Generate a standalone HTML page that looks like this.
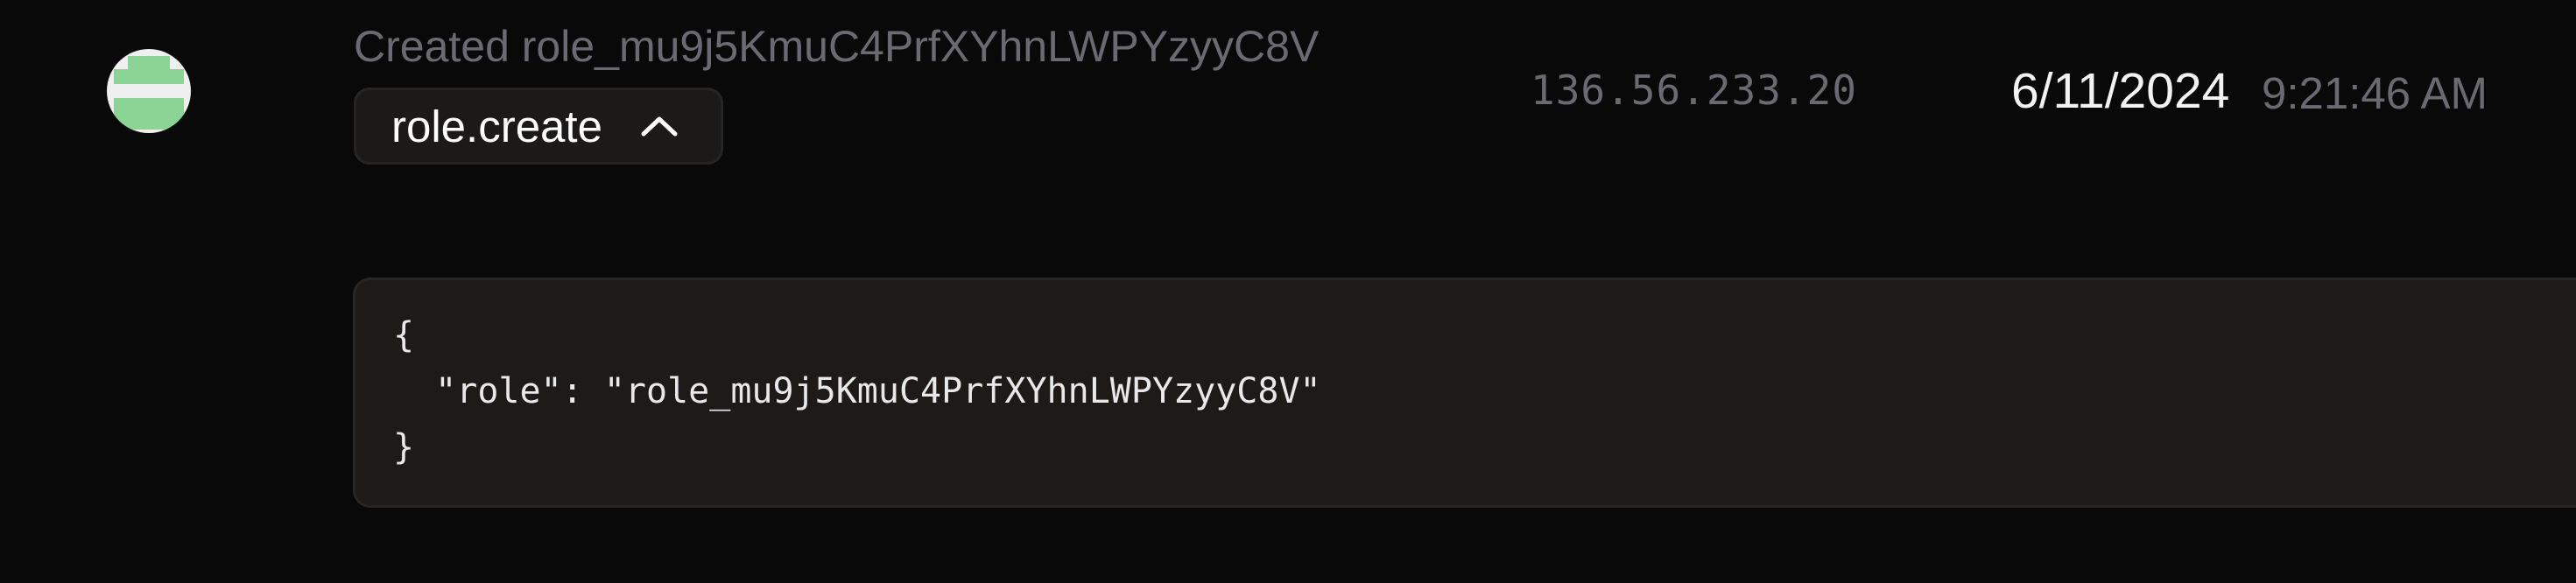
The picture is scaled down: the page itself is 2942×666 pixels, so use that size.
<!DOCTYPE html>
<html><head><meta charset="utf-8"><style>
html,body{margin:0;padding:0;width:2942px;height:666px;background:#0a0909;overflow:hidden}
body{position:relative;font-family:"Liberation Sans",sans-serif}
.av{position:absolute;left:122px;top:56px;width:96px;height:96px;border-radius:50%;background:#efefef;overflow:hidden}
.av div{position:absolute;background:#8ad595}
.t{position:absolute;white-space:nowrap;line-height:1}
.btn{position:absolute;left:404px;top:100px;width:422px;height:88px;box-sizing:border-box;border:3px solid #262524;border-radius:18px;background:#1c1a18}
.code{position:absolute;left:403px;top:317px;width:2700px;height:263px;box-sizing:border-box;border:3px solid #272625;border-radius:20px;background:#1d1a18;padding:31px 0 0 43px;font-family:"DejaVu Sans Mono","Liberation Mono",monospace;font-size:40px;line-height:64px;color:#e8e8ea;white-space:pre}
</style></head><body>
<div class="av">
<div style="left:24px;top:8px;width:48px;height:16px"></div>
<div style="left:8px;top:23px;width:80px;height:17px"></div>
<div style="left:8px;top:56px;width:80px;height:36px"></div>
</div>
<div class="t" style="left:404px;top:28px;font-size:50px;color:#6b6a72">Created role_mu9j5KmuC4PrfXYhnLWPYzyyC8V</div>
<div class="btn">
<div class="t" style="left:40px;top:16px;font-size:51px;color:#fff">role.create</div>
<svg style="position:absolute;left:324px;top:28px" width="44" height="26" viewBox="0 0 44 26"><path d="M4 22 L22 5 L40 22" fill="none" stroke="#fff" stroke-width="5" stroke-linecap="round" stroke-linejoin="round"/></svg>
</div>
<div class="t" style="left:1748px;top:80px;font-size:46px;color:#6b6a72;font-family:'DejaVu Sans Mono','Liberation Mono',monospace;letter-spacing:1px">136.56.233.20</div>
<div class="t" style="left:2297px;top:76px;font-size:57px;color:#f2f2f4">6/11/2024</div>
<div class="t" style="left:2583px;top:81px;font-size:51px;color:#6b6a72">9:21:46 AM</div>
<div class="code">{
  "role": "role_mu9j5KmuC4PrfXYhnLWPYzyyC8V"
}</div>
</body></html>
